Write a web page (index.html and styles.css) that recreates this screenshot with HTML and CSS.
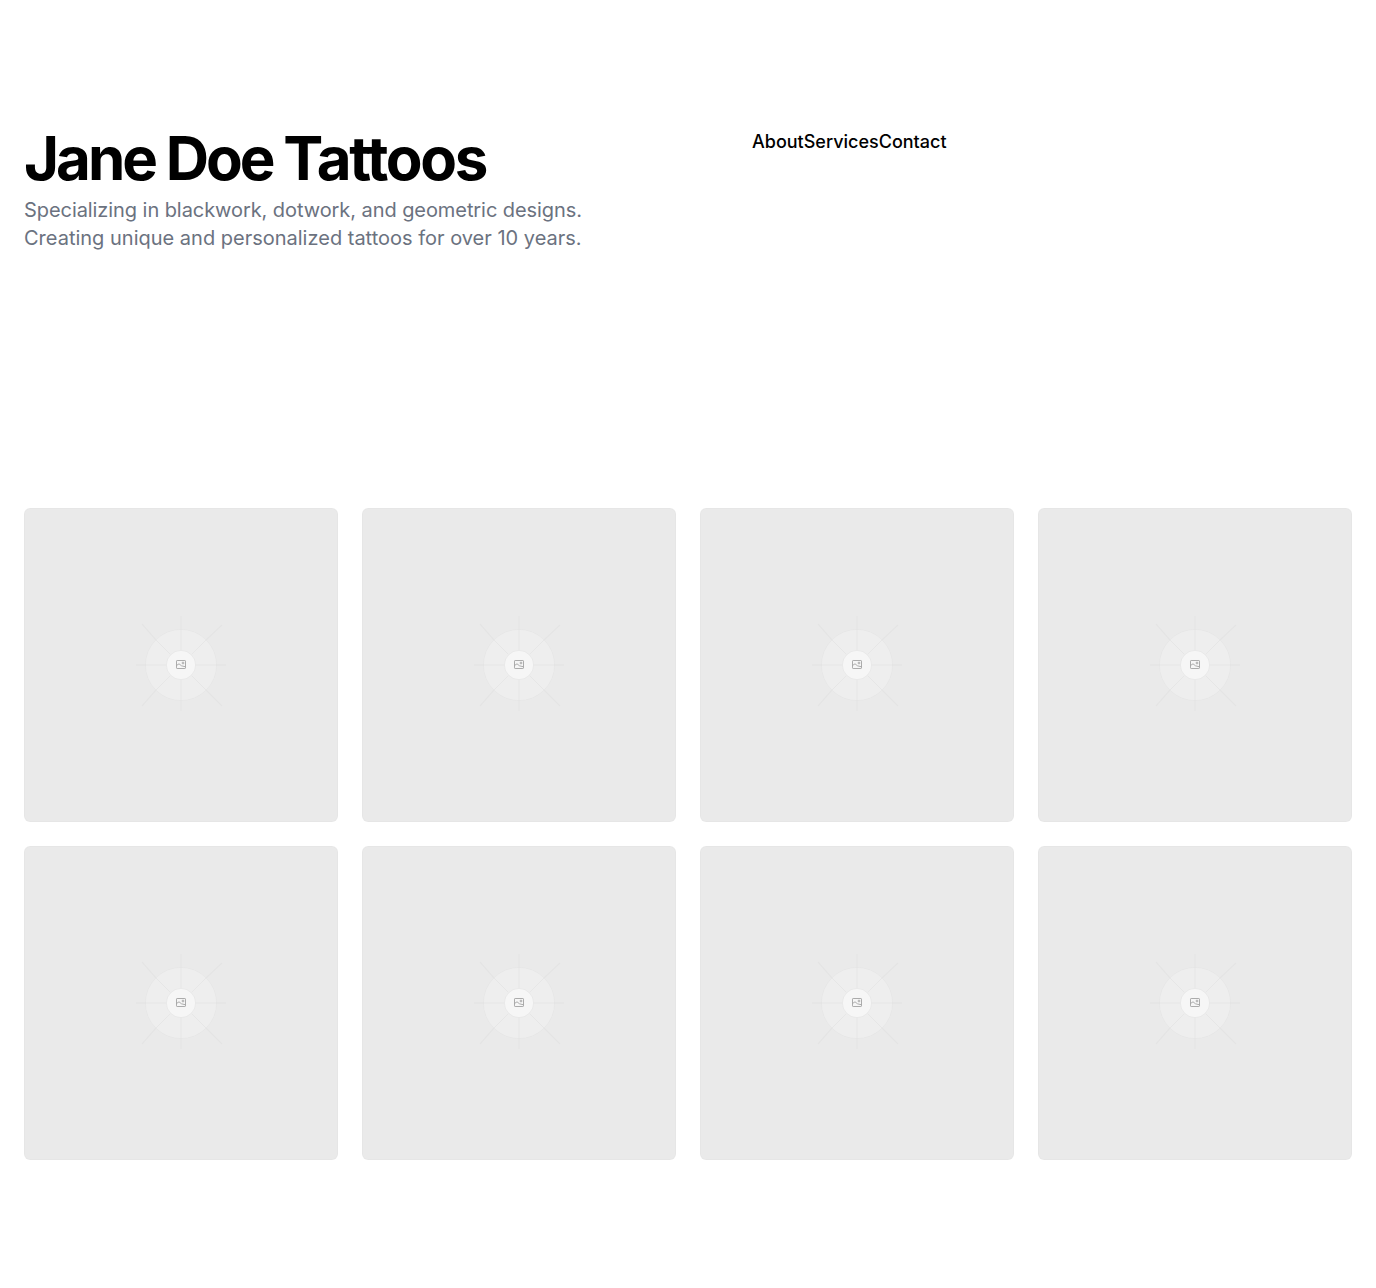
FILE: index.html
```html
<!DOCTYPE html>
<html lang="en">
<head>
  <meta charset="UTF-8">
  <meta name="viewport" content="width=device-width, initial-scale=1.0">
  <title>Jane Doe Tattoos</title>
  <link rel="stylesheet" href="styles.css">
</head>
<body>
  <svg class="defs" width="0" height="0" aria-hidden="true">
    <symbol id="placeholder" viewBox="0 0 314 314">
      <rect width="314" height="314" fill="#eaeaea"/>
      <rect x="0.5" y="0.5" width="313" height="313" rx="6" fill="none" stroke="#000" stroke-opacity=".015"/>
      <circle cx="157" cy="157" r="35.5" fill="#fff" fill-opacity=".22" stroke="#000" stroke-opacity=".02"/>
      <g stroke="#000" stroke-opacity=".03" fill="none">
        <path d="M157 122V142M157 172V192M122 157H142M172 157H192"/>
        <path d="M132 132L146.400 146.400M182 132L167.600 146.400M132 182L146.400 167.600M182 182L167.600 167.600"/>
      </g>
      <g stroke="#000" stroke-opacity=".024" fill="none" stroke-width="1.300">
        <path d="M157 108V122M157 192V203M112 157H122M192 157H202"/>
        <path d="M118 116L132 132M198 117L182 132M118 198L132 182M198 198L182 182"/>
      </g>
      <circle cx="157" cy="157" r="14.500" fill="#f6f6f6" stroke="#000" stroke-opacity=".04"/>
      <g fill="none" stroke="#a3a3a3" stroke-width=".9">
        <rect x="152.500" y="152.500" width="9" height="8" rx=".6"/>
        <path d="M152.500 157.500L155 155.800L157.500 157.800L161.500 158.800"/>
        <circle cx="159" cy="155" r=".9"/>
      </g>
    </symbol>
  </svg>

  <header class="top">
    <div class="intro">
      <h1>Jane Doe <span class="wide">Tattoos</span></h1>
      <p><span class="tight">Specializing in blackwork, dotwork, and geometric designs.</span> Creating unique and personalized tattoos for over 10 years.</p>
    </div>
    <nav class="links">
      <a href="#">About</a>
      <a href="#">Services</a>
      <a href="#">Contact</a>
    </nav>
  </header>

  <main class="gallery">
    <svg class="thumb"><use href="#placeholder"/></svg>
    <svg class="thumb"><use href="#placeholder"/></svg>
    <svg class="thumb"><use href="#placeholder"/></svg>
    <svg class="thumb"><use href="#placeholder"/></svg>
    <svg class="thumb"><use href="#placeholder"/></svg>
    <svg class="thumb"><use href="#placeholder"/></svg>
    <svg class="thumb"><use href="#placeholder"/></svg>
    <svg class="thumb"><use href="#placeholder"/></svg>
  </main>
</body>
</html>
```

FILE: styles.css
```css
body {
  margin: 0;
  padding: 128px 24px;
  background-color: #fff;
  color: #000;
  font-family: Inter, "Noto Sans", sans-serif;
  font-optical-sizing: none;
}

.defs {
  position: absolute;
}

.top {
  display: grid;
  grid-template-columns: 1fr 1fr;
  gap: 128px;
  margin-bottom: 256px;
}

h1 {
  margin: 0 0 8px;
  font-size: 60px;
  line-height: 60px;
  font-weight: 700;
  letter-spacing: -3px;
  word-spacing: -0.5px;
}

.wide {
  letter-spacing: -2.3px;
}

.intro p {
  margin: 0;
  font-size: 20px;
  line-height: 28px;
  color: #6b7280;
}

.tight {
  letter-spacing: -0.07px;
}

.links {
  display: flex;
  align-items: flex-start;
}

.links a {
  font-size: 18px;
  line-height: 28px;
  font-weight: 500;
  color: #000;
  text-decoration: none;
}

.gallery {
  display: grid;
  grid-template-columns: repeat(4, 1fr);
  gap: 24px;
}

.thumb {
  display: block;
  width: 100%;
  aspect-ratio: 1;
  border-radius: 6px;
}
```
